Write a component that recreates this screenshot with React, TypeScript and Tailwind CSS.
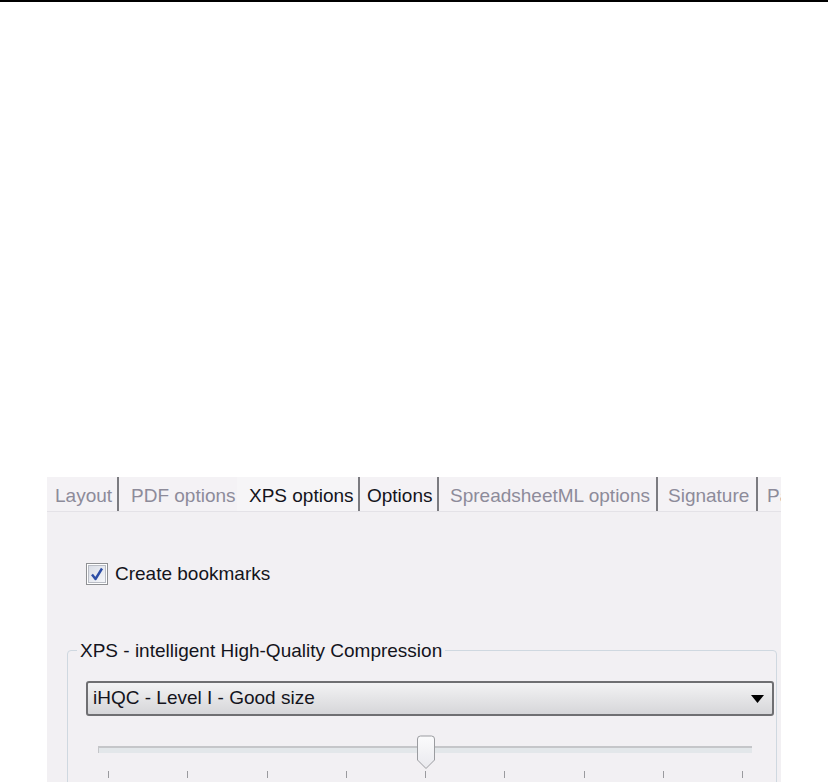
import React from "react";

interface Tab {
  label: string;
  width: string;
  pad: string;
  selected?: boolean;
  dark?: boolean;
  sep: boolean;
}

const tabs: Tab[] = [
  { label: "Layout", width: "w-[72px]", pad: "pl-[8px]", sep: true },
  { label: "PDF options", width: "w-[118px]", pad: "pl-[12px]", sep: false },
  { label: "XPS options", width: "w-[123px]", pad: "pl-[12px]", selected: true, dark: true, sep: true },
  { label: "Options", width: "w-[79px]", pad: "pl-[7px]", dark: true, sep: true },
  { label: "SpreadsheetML options", width: "w-[219px]", pad: "pl-[11px]", sep: true },
  { label: "Signature", width: "w-[100px]", pad: "pl-[10px]", sep: true },
  { label: "Pa", width: "w-[23px]", pad: "pl-[9px]", sep: false },
];

const ticks = [0, 1, 2, 3, 4, 5, 6, 7, 8];

const CheckBox = () => (
  <svg width="22" height="22" viewBox="0 0 22 22">
    <defs>
      <linearGradient id="cb" x1="0" y1="0" x2="1" y2="1">
        <stop offset="0" stopColor="#d9dde6" />
        <stop offset="1" stopColor="#f6f7fa" />
      </linearGradient>
    </defs>
    <rect x="0.5" y="0.5" width="21" height="21" fill="#ffffff" stroke="#8f9093" />
    <rect x="2.5" y="2.5" width="17" height="17" fill="url(#cb)" stroke="#b9bcc4" />
    <path d="M6 11.5 L9.5 16 L16 5.5" fill="none" stroke="#2d4ea6" strokeWidth="2.4" strokeLinejoin="round" />
  </svg>
);

const Thumb = () => (
  <svg width="20" height="35" viewBox="0 0 20 35">
    <defs>
      <linearGradient id="th" x1="0" y1="0" x2="0" y2="1">
        <stop offset="0" stopColor="#fbfbfc" />
        <stop offset="1" stopColor="#e9e9ee" />
      </linearGradient>
    </defs>
    <path
      d="M1.5 4 Q1.5 1 4.5 1 H15.5 Q18.5 1 18.5 4 V25 L10 33.5 L1.5 25 Z"
      fill="url(#th)"
      stroke="#9b9ca0"
      strokeWidth="1"
    />
  </svg>
);

const App = () => {
  return (
    <div className="h-[782px] w-full overflow-hidden bg-white font-['Liberation_Sans',Arial,sans-serif] text-[19px]">
      {/* TOP RULE */}
      <div className="h-[2px] w-full bg-black" />

      {/* DIALOG PANEL */}
      <div className="ml-[47px] mt-[475px] flex h-[305px] w-[734px] flex-col overflow-hidden bg-[#f2f0f3]">
        {/* TABS */}
        <div className="flex h-[35px] shrink-0 items-stretch border-b border-[#e4e2e7] bg-[#f4f2f5]">
          {tabs.map((t) => (
            <div
              key={t.label}
              className={`flex shrink-0 items-center overflow-hidden whitespace-nowrap pt-[4px] ${t.width} ${t.pad} ${
                t.selected ? "bg-[#f6f5f7]" : ""
              } ${t.sep ? "border-r-2 border-[#7b7b80]" : ""} ${
                t.dark ? "text-[#14141c]" : "text-[#8d8b9a]"
              }`}
            >
              {t.label}
            </div>
          ))}
        </div>

        {/* CONTENT */}
        <div className="flex flex-col pt-[48px]">
          <div className="ml-[39px] flex items-center gap-[7px] text-[#14141c]">
            <CheckBox />
            <span>Create bookmarks</span>
          </div>

          <fieldset className="ml-[20px] mt-[48px] w-[710px] rounded-[4px] border border-[#cfd8e0] pb-4 pl-[18px]">
            <legend className="ml-[-9px] px-[3px] text-[#14141c]">
              XPS - intelligent High-Quality Compression
            </legend>

            {/* COMBO BOX */}
            <div className="mt-[16px] flex h-[35px] w-[688px] items-center justify-between rounded-[3px] border-2 border-[#6f6f72] bg-gradient-to-b from-[#f3f3f4] to-[#d6d6d9] pl-[5px] pr-[8px] text-[#14141c]">
              <span>iHQC - Level I - Good size</span>
              <svg width="13" height="8" viewBox="0 0 13 8">
                <path d="M0 0 H13 L6.5 8 Z" fill="#000" />
              </svg>
            </div>

            {/* SLIDER */}
            <div className="relative ml-[12px] mt-[19px] h-[34px] w-[654px]">
              <div className="absolute left-0 right-0 top-[11px] h-[7px] border-t-2 border-l border-[#c5c6c9] bg-[#e3e7ea]" />
              <div className="absolute left-[318px] top-0">
                <Thumb />
              </div>
            </div>
            <div className="ml-[22px] mt-[2px] flex w-[635px] justify-between">
              {ticks.map((i) => (
                <div key={i} className="h-[7px] w-px bg-[#9a9a9e]" />
              ))}
            </div>
          </fieldset>
        </div>
      </div>
    </div>
  );
};

export default App;
